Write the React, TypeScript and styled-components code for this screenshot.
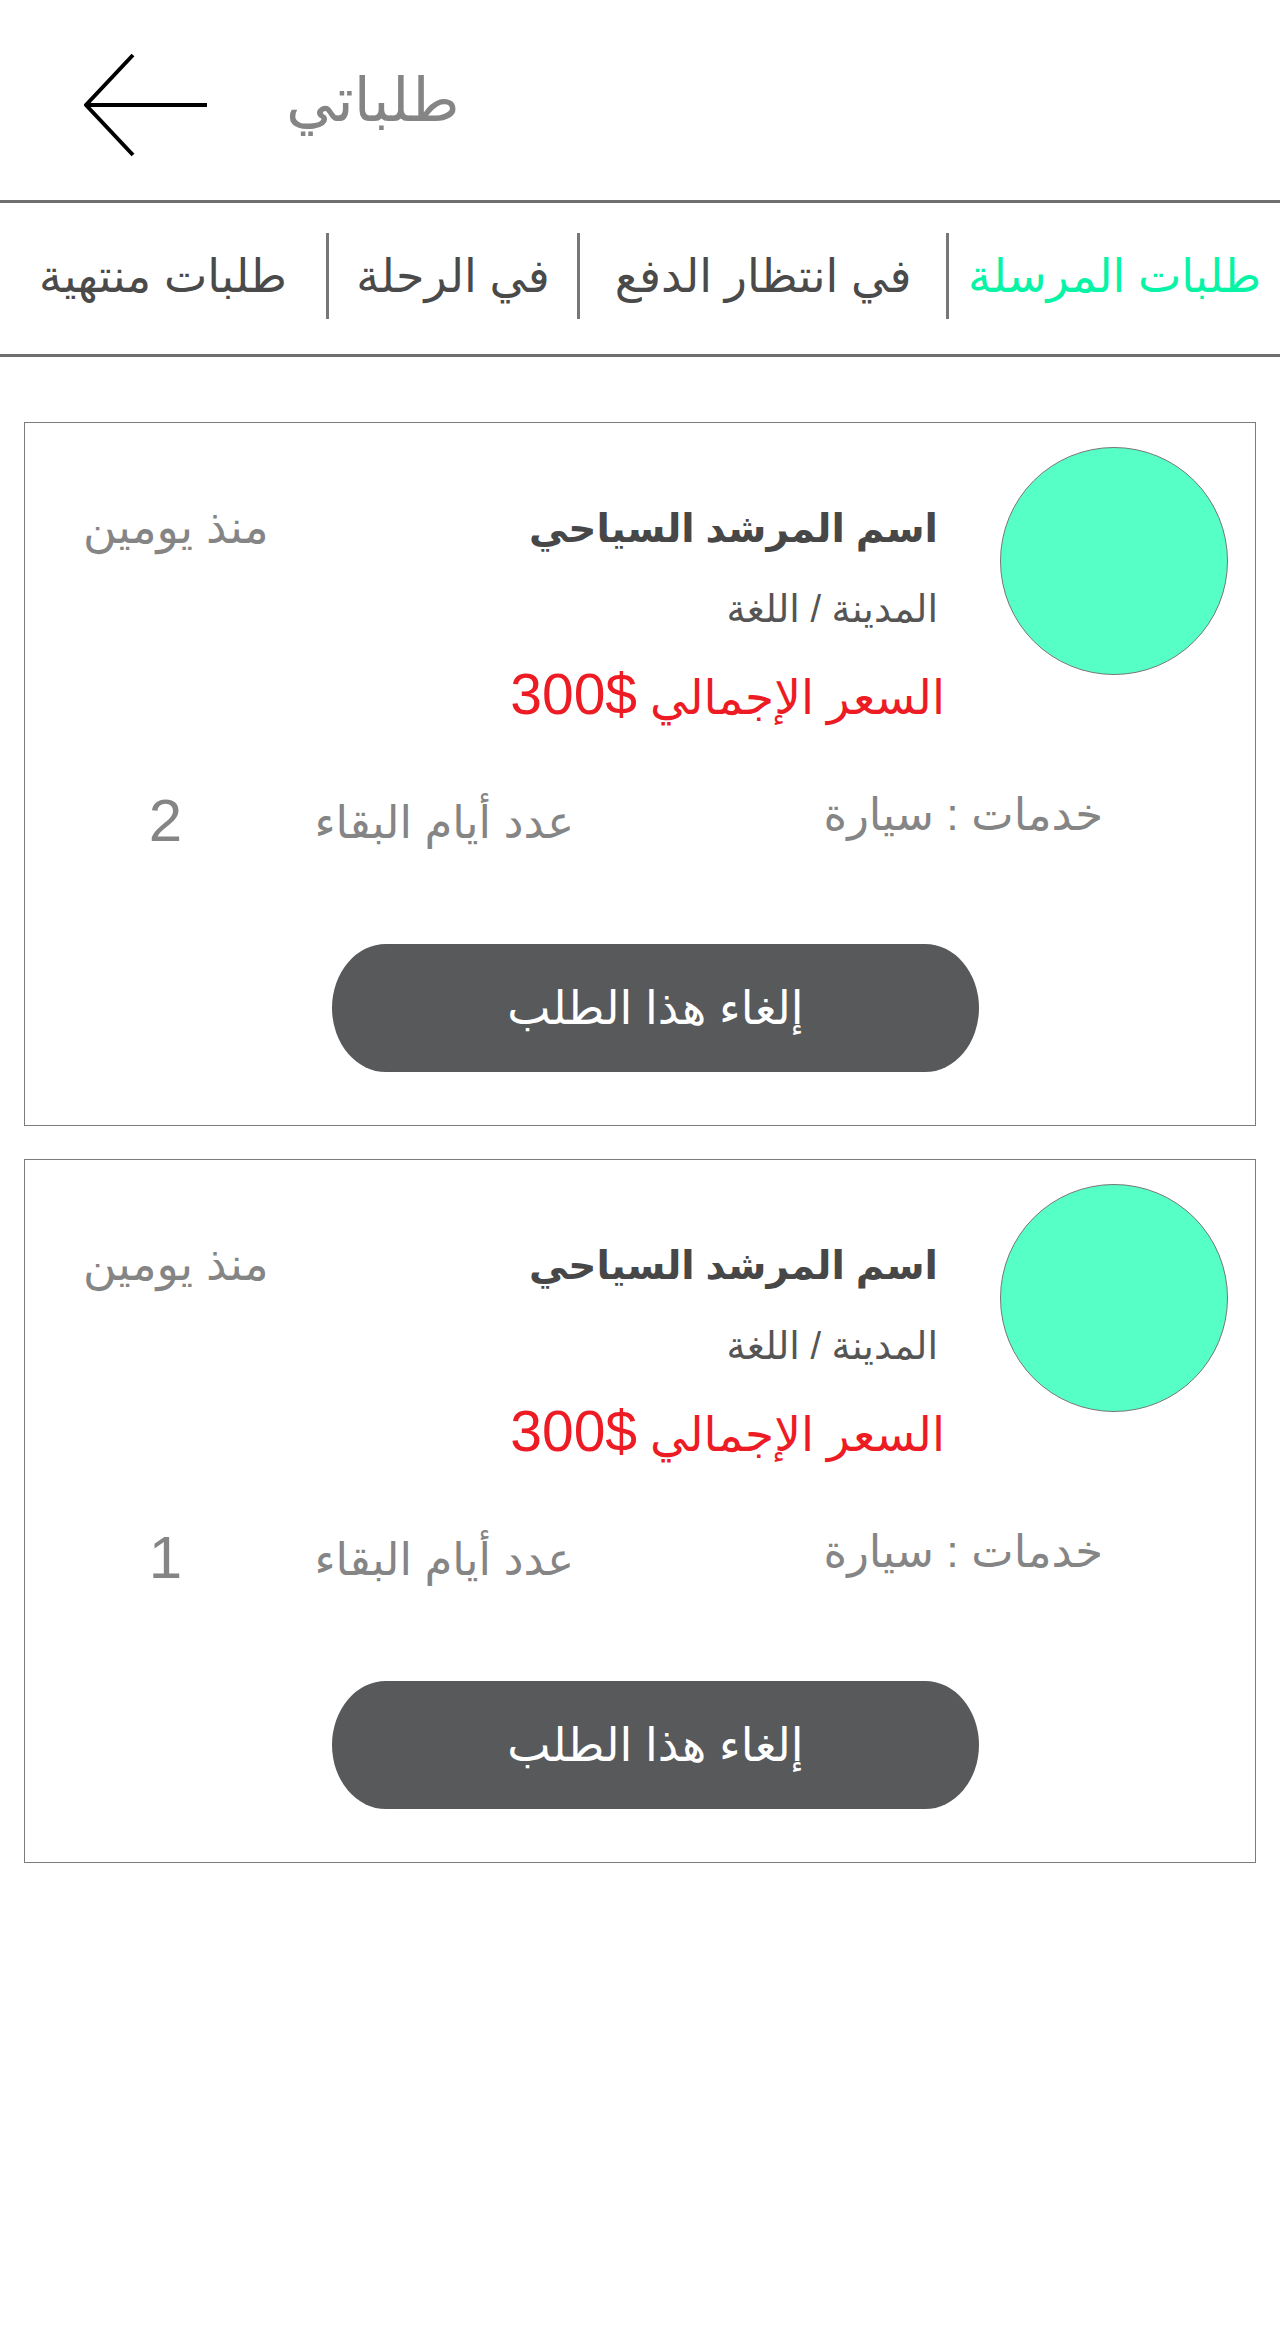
import React from "react";
import styled, { createGlobalStyle } from "styled-components";

const GlobalStyle = createGlobalStyle`
  html, body {
    margin: 0;
    padding: 0;
    background: #ffffff;
  }
  body {
    font-family: "Liberation Sans", "DejaVu Sans", Arial, sans-serif;
  }
  * { box-sizing: border-box; }
`;

const Page = styled.div`
  width: 1280px;
  min-height: 2336px;
  background: #ffffff;
`;

const Header = styled.header`
  height: 203px;
  display: flex;
  align-items: center;
  gap: 78px;
  padding-left: 84px;
  border-bottom: 3px solid #6f6f6f;
`;

const BackButton = styled.button`
  border: none;
  background: none;
  padding: 0;
  width: 124px;
  height: 104px;
  display: flex;
  cursor: pointer;
  margin-top: 10px;
`;

const Title = styled.h1`
  margin: 0;
  font-size: 61px;
  font-weight: 400;
  color: #858585;
  line-height: 1;
  direction: rtl;
`;

const TabBar = styled.nav`
  height: 154px;
  display: grid;
  grid-template-columns: 334px 369px 251px 326px;
  align-items: center;
  direction: rtl;
  padding-bottom: 6px;
  border-bottom: 3px solid #6f6f6f;
`;

const Tab = styled.div<{ $active?: boolean; $divider?: boolean }>`
  height: 86px;
  display: flex;
  align-items: center;
  justify-content: center;
  font-size: 46px;
  white-space: nowrap;
  color: ${(p) => (p.$active ? "#07f3a5" : "#4a4a4a")};
  border-left: ${(p) => (p.$divider ? "3px solid #777777" : "none")};
`;

const CardList = styled.main`
  display: flex;
  flex-direction: column;
  gap: 33px;
  padding: 65px 24px 0;
`;

const Card = styled.section`
  height: 704px;
  border: 1px solid #7c7c7c;
  direction: rtl;
  padding: 24px 27px 0 58px;
  display: flex;
  flex-direction: column;
`;

const TopRow = styled.div`
  display: flex;
  align-items: flex-start;
  justify-content: space-between;
  height: 280px;
`;

const GuideBlock = styled.div`
  display: flex;
  align-items: flex-start;
  gap: 62px;
`;

const Avatar = styled.div`
  width: 228px;
  height: 228px;
  border-radius: 50%;
  background: #55ffc6;
  border: 1px solid #777777;
  flex: none;
`;

const Info = styled.div`
  display: flex;
  flex-direction: column;
  padding-top: 54px;
`;

const GuideName = styled.div`
  font-size: 39px;
  font-weight: 700;
  color: #474747;
  line-height: 56px;
  white-space: nowrap;
`;

const CityLang = styled.div`
  font-size: 38px;
  color: #555555;
  line-height: 48px;
  margin-top: 28px;
  white-space: nowrap;
`;

const Price = styled.div`
  font-size: 47px;
  color: #ed1c24;
  line-height: 60px;
  margin-top: 31px;
  margin-right: -7px;
  white-space: nowrap;
`;

const Amount = styled.span`
  direction: ltr;
  unicode-bidi: isolate;
  font-size: 57px;
`;

const Since = styled.div`
  font-size: 46px;
  color: #858585;
  line-height: 56px;
  margin-top: 52px;
  white-space: nowrap;
`;

const DetailsRow = styled.div`
  display: grid;
  grid-template-columns: 529px 392px 1fr;
  padding-right: 125px;
  margin-top: 66px;
  align-items: center;
`;

const Detail = styled.div<{ $offset?: number; $size?: number }>`
  font-size: ${(p) => p.$size ?? 45}px;
  color: #858585;
  line-height: 56px;
  white-space: nowrap;
  transform: translateY(${(p) => p.$offset ?? 0}px);
`;

const CancelButton = styled.button`
  align-self: center;
  margin-top: 95px;
  width: 647px;
  height: 128px;
  border: none;
  border-radius: 54px / 64px;
  background: #58595b;
  color: #ffffff;
  font-family: inherit;
  font-size: 46px;
  direction: rtl;
  cursor: pointer;
`;

const ArrowIcon = () => (
  <svg width="124" height="104" viewBox="0 0 124 104" fill="none">
    <path
      d="M49 2 L2 52 L49 102 M2 52 L123 52"
      stroke="#000"
      strokeWidth="4"
      strokeLinecap="butt"
      strokeLinejoin="miter"
    />
  </svg>
);

type Order = { days: number };

const orders: Order[] = [{ days: 2 }, { days: 1 }];

const tabs = [
  { label: "طلبات المرسلة", active: true },
  { label: "في انتظار الدفع" },
  { label: "في الرحلة" },
  { label: "طلبات منتهية" },
];

const OrderCard = ({ days }: Order) => (
  <Card>
    <TopRow>
      <GuideBlock>
        <Avatar />
        <Info>
          <GuideName>اسم المرشد السياحي</GuideName>
          <CityLang>المدينة / اللغة</CityLang>
          <Price>
            السعر الإجمالي <Amount>300$</Amount>
          </Price>
        </Info>
      </GuideBlock>
      <Since>منذ يومين</Since>
    </TopRow>
    <DetailsRow>
      <Detail $offset={-6}>خدمات : سيارة</Detail>
      <Detail $offset={2}>عدد أيام البقاء</Detail>
      <Detail $offset={0} $size={60}>
        {days}
      </Detail>
    </DetailsRow>
    <CancelButton>إلغاء هذا الطلب</CancelButton>
  </Card>
);

export default function App() {
  return (
    <Page>
      <GlobalStyle />
      <Header>
        <BackButton aria-label="back">
          <ArrowIcon />
        </BackButton>
        <Title>طلباتي</Title>
      </Header>
      <TabBar>
        {tabs.map((t, i) => (
          <Tab key={t.label} $active={t.active} $divider={i < tabs.length - 1}>
            {t.label}
          </Tab>
        ))}
      </TabBar>
      <CardList>
        {orders.map((o, i) => (
          <OrderCard key={i} days={o.days} />
        ))}
      </CardList>
    </Page>
  );
}
